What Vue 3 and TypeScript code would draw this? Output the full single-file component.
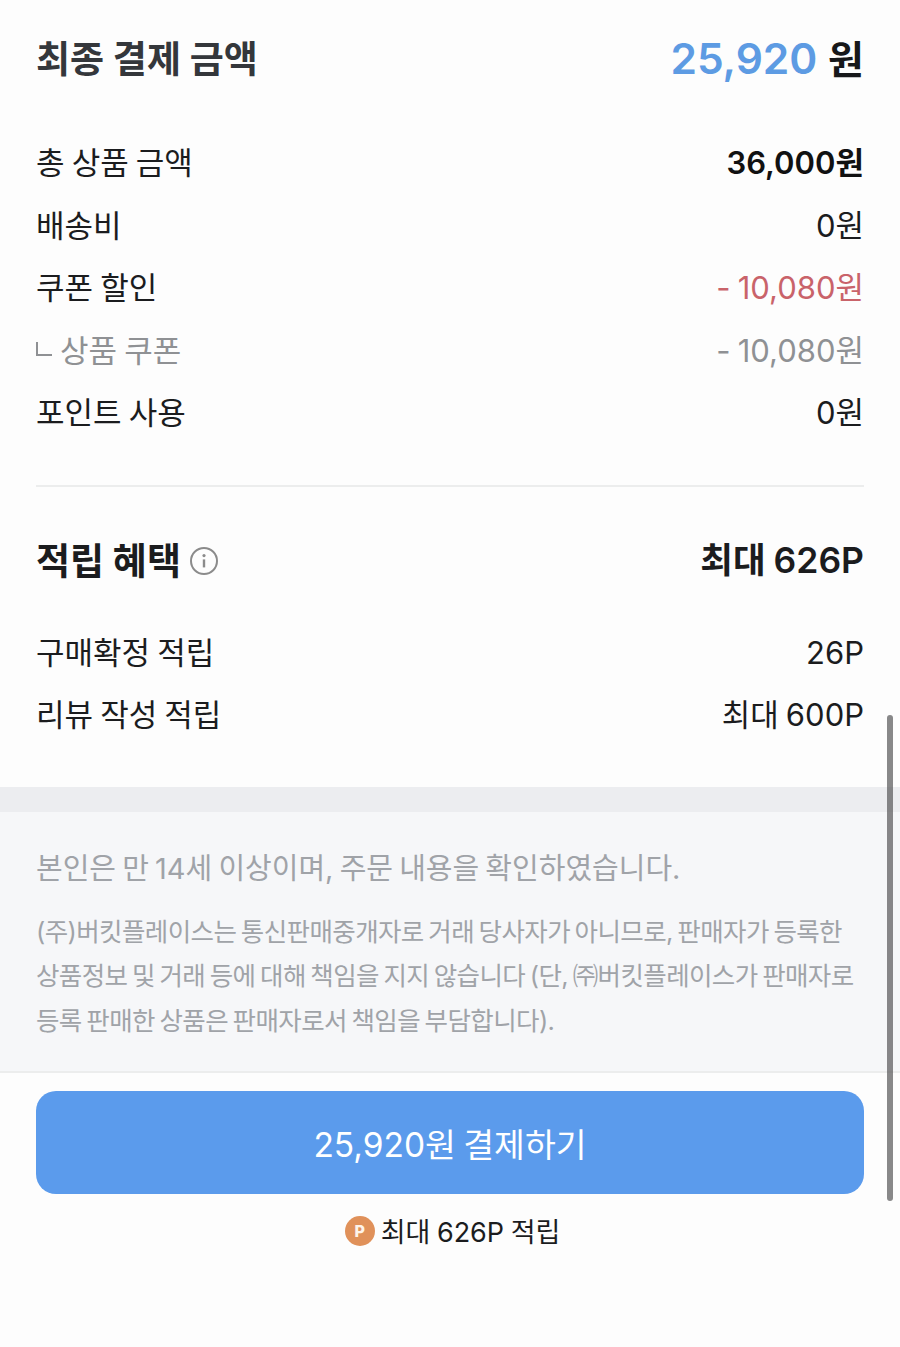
<template>
  <div class="page">
    <section class="summary">
      <div class="total">
        <h2 class="total-title">최종 결제 금액</h2>
        <div class="total-price"><span class="total-num">25,920</span> <b>원</b></div>
      </div>
      <div class="rows">
        <div v-for="row in priceRows" :key="row.label" class="row" :class="row.kind">
          <span class="row-label"><i v-if="row.kind === 'sub'" class="corner"></i>{{ row.label }}</span>
          <span class="row-value">{{ row.value }}</span>
        </div>
      </div>
    </section>

    <section class="benefit">
      <div class="benefit-head">
        <h2 class="benefit-title">
          적립 혜택
          <svg class="info" viewBox="0 0 28 28" width="28" height="28" fill="none">
            <circle cx="14" cy="14" r="13" stroke="#8b8b8b" stroke-width="2" />
            <circle cx="14" cy="8.6" r="1.6" fill="#8b8b8b" />
            <path d="M14 12.4v8" stroke="#8b8b8b" stroke-width="2.4" />
          </svg>
        </h2>
        <strong class="benefit-max">최대 626P</strong>
      </div>
      <div class="rows">
        <div v-for="row in pointRows" :key="row.label" class="row">
          <span class="row-label">{{ row.label }}</span>
          <span class="row-value">{{ row.value }}</span>
        </div>
      </div>
    </section>

    <div class="band"></div>

    <section class="notice">
      <p class="notice-main">본인은 만 14세 이상이며, 주문 내용을 확인하였습니다.</p>
      <p class="notice-sub">(주)버킷플레이스는 통신판매중개자로 거래 당사자가 아니므로, 판매자가 등록한 상품정보 및 거래 등에 대해 책임을 지지 않습니다 (단, ㈜버킷플레이스가 판매자로 등록 판매한 상품은 판매자로서 책임을 부담합니다).</p>
    </section>

    <footer class="pay">
      <button class="pay-btn">25,920원 결제하기</button>
      <div class="pay-point"><span class="p-badge">P</span>최대 626P 적립</div>
    </footer>

    <div class="scrollbar"></div>
  </div>
</template>

<script setup lang="ts">
interface Row {
  label: string;
  value: string;
  kind?: string;
}

const priceRows: Row[] = [
  { label: '총 상품 금액', value: '36,000원', kind: 'strong' },
  { label: '배송비', value: '0원' },
  { label: '쿠폰 할인', value: '- 10,080원', kind: 'discount' },
  { label: '상품 쿠폰', value: '- 10,080원', kind: 'sub' },
  { label: '포인트 사용', value: '0원' }
];

const pointRows: Row[] = [
  { label: '구매확정 적립', value: '26P' },
  { label: '리뷰 작성 적립', value: '최대 600P' }
];
</script>

<style>
html, body {
  margin: 0;
  background: #fdfdfd;
}
</style>

<style scoped>
.page {
  position: relative;
  height: 1347px;
  overflow: hidden;
  background: #fdfdfd;
  color: #1b1c1e;
  font-family: Inter, 'Noto Sans CJK KR', sans-serif;
}

h2, p {
  margin: 0;
}

.summary {
  margin: 0 36px;
  padding: 29px 0 40px;
  border-bottom: 2px solid #eceded;
}

.total {
  display: flex;
  justify-content: space-between;
  align-items: center;
  height: 56px;
  margin-bottom: 47px;
}

.total-title {
  font-size: 37px;
  font-weight: 700;
  color: #34373b;
}

.total-price {
  font-size: 42.5px;
  font-weight: 600;
}

.total-num {
  color: #5d9be3;
}

.total-price b {
  font-size: 39px;
  font-weight: 700;
  color: #17181a;
}

.row {
  display: flex;
  justify-content: space-between;
  height: 62.5px;
  line-height: 62.5px;
  font-size: 31px;
  word-spacing: -1.6px;
}

.row.strong .row-value {
  font-weight: 600;
  color: #111;
}

.row.discount .row-value {
  color: #c9636a;
}

.row.sub {
  color: #8f9194;
}

.corner {
  display: inline-block;
  width: 14px;
  height: 12px;
  margin-right: 8px;
  border-left: 2px solid #8f9194;
  border-bottom: 2px solid #8f9194;
  vertical-align: 6px;
}

.benefit {
  margin: 0 36px;
  padding-top: 44px;
}

.benefit-head {
  display: flex;
  justify-content: space-between;
  align-items: center;
  height: 56px;
  margin-bottom: 35px;
}

.benefit-title {
  display: flex;
  align-items: center;
  gap: 9px;
  font-size: 37px;
  font-weight: 700;
}

.info {
  margin-top: 4px;
}

.benefit-max {
  margin-bottom: 2px;
  font-size: 35.5px;
  font-weight: 600;
  word-spacing: -1px;
}

.band {
  height: 25px;
  margin-top: 40px;
  background: #ecedf0;
}

.notice {
  height: 261px;
  box-sizing: border-box;
  padding: 36px 36px 0;
  background: #f6f7f9;
  border-bottom: 2px solid #eceded;
  color: #a0a3a8;
}

.notice-main {
  font-size: 29px;
  line-height: 42px;
  margin-bottom: 20px;
  word-spacing: -2px;
}

.notice-sub {
  font-size: 25.5px;
  line-height: 44.5px;
  letter-spacing: -0.6px;
  word-spacing: -2px;
}

.pay {
  padding: 18px 36px 0;
}

.pay-btn {
  display: block;
  width: 100%;
  height: 103px;
  border: none;
  border-radius: 20px;
  background: #5b9bec;
  color: #fff;
  font-family: inherit;
  font-size: 33.5px;
  word-spacing: -2px;
}

.pay-point {
  display: flex;
  justify-content: center;
  align-items: center;
  gap: 6px;
  margin-top: 20px;
  padding-left: 5px;
  height: 34px;
  font-size: 27px;
  word-spacing: -1px;
}

.p-badge {
  display: flex;
  justify-content: center;
  align-items: center;
  width: 30px;
  height: 30px;
  border-radius: 50%;
  background: #e0915a;
  color: #fdf3ea;
  font-size: 16px;
  font-weight: 800;
}

.scrollbar {
  position: absolute;
  top: 715px;
  left: 887px;
  width: 6px;
  height: 486px;
  border-radius: 3px;
  background: rgba(90, 90, 92, 0.72);
}
</style>
